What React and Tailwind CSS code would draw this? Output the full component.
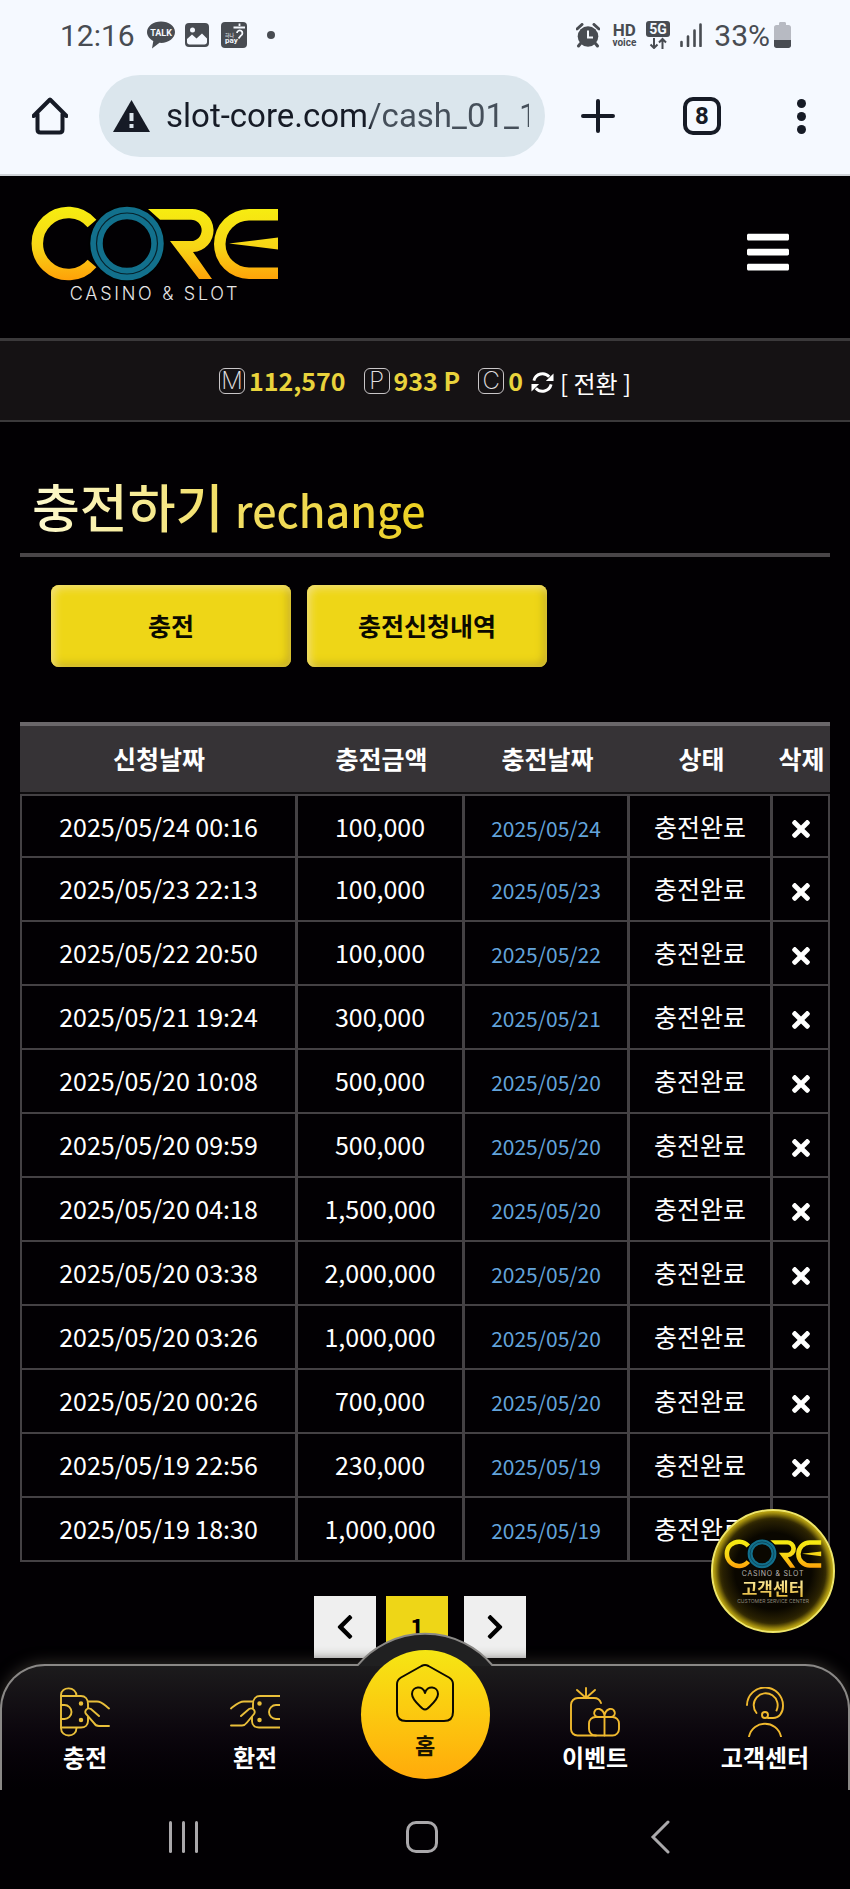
import { FaBars, FaChevronLeft, FaChevronRight, FaTimes } from "react-icons/fa";

const rows = [
  { requested: "2025/05/24 00:16", amount: "100,000", date: "2025/05/24" },
  { requested: "2025/05/23 22:13", amount: "100,000", date: "2025/05/23" },
  { requested: "2025/05/22 20:50", amount: "100,000", date: "2025/05/22" },
  { requested: "2025/05/21 19:24", amount: "300,000", date: "2025/05/21" },
  { requested: "2025/05/20 10:08", amount: "500,000", date: "2025/05/20" },
  { requested: "2025/05/20 09:59", amount: "500,000", date: "2025/05/20" },
  { requested: "2025/05/20 04:18", amount: "1,500,000", date: "2025/05/20" },
  { requested: "2025/05/20 03:38", amount: "2,000,000", date: "2025/05/20" },
  { requested: "2025/05/20 03:26", amount: "1,000,000", date: "2025/05/20" },
  { requested: "2025/05/20 00:26", amount: "700,000", date: "2025/05/20" },
  { requested: "2025/05/19 22:56", amount: "230,000", date: "2025/05/19" },
  { requested: "2025/05/19 18:30", amount: "1,000,000", date: "2025/05/19" },
];

const StatusBar = () => {
  return (
    <div className="flex h-[70px] items-center justify-between pl-[60px] pr-[59px] font-['Roboto',sans-serif] text-[30px] text-[#484c52]">
      <div className="flex items-center">
        <span>12:16</span>
        <svg className="ml-3 h-7 w-7" viewBox="0 0 28 28">
          <path
            d="M14 0.5C6.300.5 0 5.200 0 11c0 3.800 2.600 7 6.300 8.900L5 27.500l7.500-5.700c.5 0 1 .1 1.500.1 7.700 0 14-4.900 14-10.900S21.700.5 14 .5z"
            fill="#484c52"
          />
          <text x="14" y="15" textAnchor="middle" fontSize="9" fontWeight="700" fill="#f5f9ff">
            TALK
          </text>
        </svg>
        <svg className="ml-2.5 h-6 w-6" viewBox="0 0 24 24">
          <rect width="24" height="24" rx="4" fill="#484c52" />
          <path d="M2 19v-3l5-4.500 4.500 4L17 10.500l5 5V19c0 1.500-1 2.500-2.500 2.500h-15C3 21.500 2 20.500 2 19z" fill="#f5f9ff" />
          <circle cx="7.500" cy="7" r="2.500" fill="#f5f9ff" />
        </svg>
        <svg className="ml-3 h-[26px] w-[26px]" viewBox="0 0 26 26">
          <rect width="26" height="26" rx="4" fill="#484c52" />
          <path d="M18.500 1.500v2.500M12.500 5.500h11.500M16 11a2.700 2.700 0 1 1 4 2.500l-2.500 3" fill="none" stroke="#f5f9ff" strokeWidth="1.800" />
          <text x="4" y="15" fontSize="5" fill="#f5f9ff" fontFamily="Noto Sans CJK KR">
            하나
          </text>
          <text x="4" y="21" fontSize="8" fontWeight="700" fill="#f5f9ff">
            pay
          </text>
        </svg>
        <span className="ml-5 h-2 w-2 rounded-full bg-[#484c52]" />
      </div>

      <div className="flex items-center">
        <svg className="h-[25px] w-6" viewBox="0 0 24 25">
          <path d="M1 6l5-4.500M23 6l-5-4.500M4.500 20.500L2.500 23M19.500 20.500l2 2.500" stroke="#484c52" strokeWidth="3" strokeLinecap="round" />
          <circle cx="12" cy="13.500" r="10.300" fill="#484c52" />
          <path d="M12 7.500v7h5" fill="none" stroke="#f5f9ff" strokeWidth="2" />
        </svg>
        <div className="ml-3 flex flex-col items-center font-bold">
          <span className="text-[17px] leading-4">HD</span>
          <span className="text-[10px] leading-[10px]">voice</span>
        </div>
        <svg className="ml-2.5 h-7 w-6" viewBox="0 0 24 28">
          <rect width="24" height="16" rx="3" fill="#484c52" />
          <text x="12" y="13" textAnchor="middle" fontSize="14" fontWeight="700" fill="#f5f9ff">
            5G
          </text>
          <path d="M8 17v10M4.500 23.500L8 27l3.500-3.500M16.500 28V18M13 21.500l3.500-3.500 3.500 3.500" fill="none" stroke="#484c52" strokeWidth="2" />
        </svg>
        <svg className="ml-2.5 h-6 w-[22px]" viewBox="0 0 22 24">
          <path d="M1.500 19v4M8 13.500V23M14.500 7.500V23M20.500 1.500V23" stroke="#484c52" strokeWidth="2.600" strokeLinecap="round" />
        </svg>
        <span className="ml-3">33%</span>
        <svg className="ml-1 h-[26px] w-[17px]" viewBox="0 0 17 26">
          <path d="M5 3V1.500C5 .7 5.500 0 6.500 0h4C11.500 0 12 .7 12 1.500V3h2.500C16 3 17 4 17 5.500V18H0V5.500C0 4 1 3 2.500 3z" fill="#b7bac2" />
          <path d="M0 18h17v5.500c0 1.500-1 2.500-2.500 2.500h-12C1 26 0 25 0 23.500z" fill="#484c52" />
        </svg>
      </div>
    </div>
  );
};

const BrowserBar = () => {
  return (
    <div className="flex h-[104px] items-center pb-3 pl-8 pr-11 text-[#161b26]">
      <button type="button" aria-label="Home">
        <svg className="h-[38px] w-9" viewBox="0 0 36 38">
          <path
            d="M1.500 19L18 2.500 34.500 19M5.500 17v15.500c0 2 1 3 3 3h19c2 0 3-1 3-3V17"
            fill="none"
            stroke="currentColor"
            strokeWidth="4"
            strokeLinecap="round"
            strokeLinejoin="round"
          />
        </svg>
      </button>
      <div className="ml-[31px] flex h-[82px] flex-1 items-center rounded-full bg-[#dbe6ed] pl-3.5 pr-4">
        <svg className="h-8 w-[37px] shrink-0" viewBox="0 0 37 32">
          <path d="M18.500 0L37 32H0z" fill="currentColor" />
          <path d="M18.500 13v8M18.500 24v4" stroke="#dbe6ed" strokeWidth="4" />
        </svg>
        <input
          type="text"
          aria-label="Address"
          defaultValue="slot-core.com/cash_01_1.php"
          className="ml-4 w-full min-w-0 bg-linear-to-r from-[#161b26] from-56% to-[#454f5a] to-57% bg-clip-text font-['Roboto',sans-serif] text-[33px] leading-[44px] text-transparent outline-none"
        />
      </div>
      <button type="button" aria-label="New tab" className="ml-9">
        <svg className="h-[34px] w-[34px]" viewBox="0 0 34 34">
          <path d="M17 2v30M2 17h30" stroke="currentColor" strokeWidth="4" strokeLinecap="round" />
        </svg>
      </button>
      <button
        type="button"
        className="ml-[68px] flex h-[38px] w-[38px] items-center justify-center rounded-[10px] border-4 border-[#161b26] font-['Roboto',sans-serif] text-2xl font-bold"
      >
        8
      </button>
      <button type="button" aria-label="Menu" className="ml-[76px] flex flex-col gap-1">
        <span className="h-[9px] w-[9px] rounded-full bg-[#161b26]" />
        <span className="h-[9px] w-[9px] rounded-full bg-[#161b26]" />
        <span className="h-[9px] w-[9px] rounded-full bg-[#161b26]" />
      </button>
    </div>
  );
};

const CoreLogo = ({ id, className }) => {
  return (
    <svg className={className} viewBox="0 0 250 76">
      <defs>
        <linearGradient id={id} gradientUnits="userSpaceOnUse" x1="0" y1="0" x2="0" y2="75">
          <stop offset="0" stopColor="#f6ee10" />
          <stop offset="0.55" stopColor="#f7d516" />
          <stop offset="1" stopColor="#ff9f08" />
        </linearGradient>
      </defs>
      <path d="M62 17.500A31 31 0 1 0 62 57.500" fill="none" stroke={`url(#${id})`} strokeWidth="11.500" />
      <path
        d="M118 3H161a21.500 21.500 0 0 1 2 43L182 73H169L140 35H161a10.600 10.600 0 0 0 0-21.300H130Z"
        fill={`url(#${id})`}
      />
      <path
        d="M248 3H219a35 35 0 0 0 0 70H248V61.500H219a23.500 23.500 0 0 1 0-47H248Z"
        fill={`url(#${id})`}
      />
      <path d="M199 37.500L248 31.500V43.500Z" fill={`url(#${id})`} />
      <circle cx="97" cy="37.500" r="37.500" fill="none" stroke="#000" strokeWidth="2" />
      <circle cx="97" cy="37.500" r="30.500" fill="none" stroke="#12708c" strokeWidth="12.500" />
      <circle cx="97" cy="37.500" r="30.500" fill="none" stroke="#06222c" strokeWidth="1.200" />
    </svg>
  );
};

const Point = ({ letter, value }) => {
  return (
    <div className="flex items-center gap-1">
      <span className="flex h-[26px] w-[26px] items-center justify-center rounded-md border border-[#c9c6c8] font-['Inter',sans-serif] text-2xl font-extralight leading-none text-[#e4e1e3]">
        {letter}
      </span>
      <span className="font-bold text-[#e9d33c]">{value}</span>
    </div>
  );
};

const ChargeIcon = () => (
  <svg className="h-[50px] w-[50px]" viewBox="0 0 50 50" fill="none" stroke="#e9bf3a" strokeWidth="1.900" strokeLinecap="round">
    <path d="M1 41V8c0-9 15.500-9 15.500 1M1 41c0 10 15.500 10 15.500 0" />
    <path d="M1 9h20c4 0 7 3 7 8v4M28 30v4c0 4-3 6.500-7 6.500H1" />
    <path d="M1 18h3.500a7 7 0 0 1 0 14H1" />
    <path d="M28 14.500h9c5 0 7 3 12 7M39 29l-8-7c-4-2-7 2-5 5l8 9c1 2 3 3 5 3h10" />
    <circle cx="21" cy="16.500" r="1.300" fill="#e9bf3a" />
    <circle cx="21" cy="33" r="1.300" fill="#e9bf3a" />
  </svg>
);

const ExchangeIcon = () => (
  <svg className="h-[50px] w-[50px]" viewBox="0 0 50 50" fill="none" stroke="#e9bf3a" strokeWidth="1.900" strokeLinecap="round">
    <path d="M50 9H30c-4 0-7 3-7 8v4M22 30v4c0 4 3 6.500 7 6.500h21" />
    <path d="M50 18h-4a7 7 0 0 0 0 14h4" />
    <path d="M23 14.500h-9c-5 0-8 3-13 7M11 29l8-7c4-2 7 2 5 5l-7 8.500c-1.500 2-3 3-5 3H1" />
    <circle cx="29.500" cy="16.500" r="1.300" fill="#e9bf3a" />
    <circle cx="29.500" cy="33" r="1.300" fill="#e9bf3a" />
  </svg>
);

const EventIcon = () => (
  <svg className="h-[50px] w-[50px]" viewBox="0 0 50 50" fill="none" stroke="#f0b92e" strokeWidth="1.900" strokeLinecap="round">
    <path d="M16 1v10M7 3l9 8 9-8" />
    <path d="M31 16c-1-3-3-5-7-5H8c-4 0-7 3-7 7v24c0 4 3 6.500 6.500 6.500H26" />
    <rect x="19" y="30" width="30" height="18.500" rx="6.500" />
    <path d="M34.500 30v18.500M34.500 30h-7c-6-2-3-9 2-8 3 1 5 4 5 8zM34.500 30h7c6-2 3-9-2-8-3 1-5 4-5 8z" />
  </svg>
);

const SupportIcon = () => (
  <svg className="h-[50px] w-[50px]" viewBox="0 0 50 50" fill="none" stroke="#f0b92e" strokeWidth="1.900" strokeLinecap="round">
    <path d="M7 18a18 18 0 0 1 36 1c0 7-4 12-10 12h-5" />
    <path d="M16.500 26a12 12 0 1 1 20-2.500" />
    <circle cx="25" cy="28" r="3" />
    <path d="M9 49.500c4-17 28-17 32 0" />
  </svg>
);

const HomeIcon = () => (
  <svg className="h-[58px] w-[58px]" viewBox="0 0 58 58" fill="none" stroke="#0c0a00" strokeWidth="2" strokeLinejoin="round">
    <path d="M1 20c0-3 1.500-5 4-6.500L25.500 2c2.500-1.300 4.500-1.300 7 0L53 13.500c2.500 1.500 4 3.500 4 6.500v28c0 6-3 9-9 9H10c-6 0-9-3-9-9z" />
    <path d="M29 29c2-8 13-7 13 1 0 6-7 11-10.500 14.500-1.500 1.300-3.500 1.300-5 0C23 41 16 36 16 30c0-8 11-9 13-1z" />
  </svg>
);

const NavItem = ({ icon, label }) => {
  return (
    <a href="#" className="flex flex-col items-center gap-0.5 pt-[23px]">
      {icon}
      <span className="whitespace-nowrap text-2xl font-bold leading-9 text-white">{label}</span>
    </a>
  );
};

const BottomNav = () => {
  return (
    <nav className="relative z-10">
      {/* Support badge */}
      <a
        href="#"
        className="absolute bottom-full right-[15px] z-20 mb-[31px] flex h-[124px] w-[124px] flex-col items-center rounded-full border-2 border-[#efe66a] bg-[radial-gradient(circle,#0a0700_45%,#2e2503_62%,#a89008_72%)] pt-7 shadow-[inset_0_0_8px_#e8d020]"
      >
        <CoreLogo id="badgeGold" className="h-[30px] w-[98px]" />
        <span className="font-['Inter',sans-serif] text-[7px] leading-[9px] tracking-widest text-[#b8b4b0]">CASINO &amp; SLOT</span>
        <span className="bg-linear-to-b from-[#fff3a8] to-[#e3b52c] bg-clip-text text-[17px] font-bold leading-5 text-transparent">
          고객센터
        </span>
        <span className="font-['Inter',sans-serif] text-[5px] leading-[6px] text-[#8d887c]">CUSTOMER SERVICE CENTER</span>
      </a>

      <div className="relative grid h-[126px] grid-cols-5 rounded-t-[45px] bg-linear-to-b from-[#1d1c1d] to-[#020003] shadow-[0_-2px_14px_#2b2824]">
        <div className="pointer-events-none absolute inset-0 rounded-t-[45px] border-x-2 border-t-2 border-[#8a8886]" />
        <NavItem icon={<ChargeIcon />} label="충전" />
        <NavItem icon={<ExchangeIcon />} label="환전" />
        <div className="relative flex justify-center">
          {/* Raised arch behind the home button */}
          <svg className="absolute bottom-full -mb-0.5 h-[34px] w-[140px]" viewBox="0 0 140 34">
            <path d="M2 34A88 88 0 0 1 138 34Z" fill="#202021" />
            <path d="M2 34A88 88 0 0 1 138 34" fill="none" stroke="#8a8886" strokeWidth="2" />
          </svg>
          <a
            href="#"
            className="absolute -top-3.5 flex h-[129px] w-[129px] flex-col items-center rounded-full bg-linear-to-b from-[#f5e614] to-[#ffaa0a] pt-[14px]"
          >
            <HomeIcon />
            <span className="pt-1 text-[22px] font-bold leading-9 text-[#1a1400]">홈</span>
          </a>
        </div>
        <NavItem icon={<EventIcon />} label="이벤트" />
        <NavItem icon={<SupportIcon />} label="고객센터" />
      </div>
    </nav>
  );
};

const SystemBar = () => {
  return (
    <div className="relative z-20 flex h-[99px] items-center justify-between bg-[#020003] pb-1.5 pl-[169px] pr-[180px]">
      <button type="button" aria-label="Recent apps" className="flex gap-2.5">
        <span className="h-8 w-[3px] rounded-full bg-[#aaa8ab]" />
        <span className="h-8 w-[3px] rounded-full bg-[#aaa8ab]" />
        <span className="h-8 w-[3px] rounded-full bg-[#aaa8ab]" />
      </button>
      <button type="button" aria-label="Home" className="mr-1 h-8 w-8 rounded-[10px] border-3 border-[#aaa8ab]" />
      <button type="button" aria-label="Back">
        <svg className="h-[34px] w-5" viewBox="0 0 20 34">
          <path d="M18 2L3 17l15 15" fill="none" stroke="#aaa8ab" strokeWidth="3" strokeLinecap="round" />
        </svg>
      </button>
    </div>
  );
};

const App = () => {
  return (
    <div className="overflow-hidden bg-[#020003] font-['Noto_Sans_CJK_KR',sans-serif] text-white">
      {/* Phone and browser bars */}
      <div className="border-b-2 border-[#cfd3d8] bg-[#f5f9ff]">
        <StatusBar />
        <BrowserBar />
      </div>

      {/* Site header */}
      <header className="flex h-[162px] items-start justify-between pl-[30px] pr-[61px] pt-[30px]">
        <a href="#" className="flex flex-col items-center">
          <CoreLogo id="headerGold" className="h-[76px] w-[250px]" />
          <span className="font-['Inter',sans-serif] text-[18px] font-light leading-6 tracking-[0.15em] text-[#e6e6e6]">
            CASINO &amp; SLOT
          </span>
        </a>
        <button type="button" aria-label="메뉴" className="pt-[22px]">
          <FaBars className="h-12 w-[42px]" />
        </button>
      </header>

      {/* Balance */}
      <div className="flex h-[84px] items-center justify-center gap-[18px] border-b-2 border-t-3 border-[#3b393b] bg-[#151214] text-[25px]">
        <Point letter="M" value="112,570" />
        <Point letter="P" value="933 P" />
        <div className="flex items-center gap-2">
          <Point letter="C" value="0" />
          <button type="button" className="flex items-center gap-1.5 pt-1">
            <svg className="h-[23px] w-[23px]" viewBox="0 0 24 24">
              <path d="M3 10a9.300 9.300 0 0 1 16-4M21 14a9.300 9.300 0 0 1-16 4" fill="none" stroke="#fff" strokeWidth="3" />
              <path d="M23.500 2.500v8H15.500zM.5 21.500v-8H8.500z" fill="#fff" />
            </svg>
            <span className="text-2xl">[ 전환 ]</span>
          </button>
        </div>
      </div>

      <main className="px-5">
        {/* Title */}
        <div className="border-b-4 border-[#494548] pb-2 pl-3 pt-12">
          <h1 className="w-fit bg-linear-to-r from-[#fdfad0] via-[#f3e06a] via-45% to-[#ecd01c] bg-clip-text text-[52px] font-medium leading-[72px] text-transparent">
            충전하기 <span className="text-[43px]">rechange</span>
          </h1>
        </div>

        {/* Tabs */}
        <div className="flex gap-4 pl-[31px] pt-7 text-[25px] font-bold text-[#0c0a00]">
          <button
            type="button"
            className="h-[82px] w-60 rounded-lg bg-[#eed617] shadow-[inset_3px_3px_8px_#f4e27a,inset_-3px_-3px_8px_#c2a91c]"
          >
            충전
          </button>
          <button
            type="button"
            className="h-[82px] w-60 rounded-lg bg-[#eed617] shadow-[inset_3px_3px_8px_#f4e27a,inset_-3px_-3px_8px_#c2a91c]"
          >
            충전신청내역
          </button>
        </div>

        {/* History */}
        <table className="mt-[55px] w-full table-fixed border-separate border-spacing-0 text-center text-[25px]">
          <colgroup>
            <col className="w-[278px]" />
            <col className="w-[167px]" />
            <col className="w-[165px]" />
            <col className="w-[143px]" />
            <col className="w-[57px]" />
          </colgroup>
          <thead>
            <tr className="h-[72px] bg-[#363336] [&>th]:whitespace-nowrap [&>th]:border-b-2 [&>th]:border-t-4 [&>th]:border-b-[#0d0b0d] [&>th]:border-t-[#6a676a]">
              <th>신청날짜</th>
              <th>충전금액</th>
              <th>충전날짜</th>
              <th>상태</th>
              <th>삭제</th>
            </tr>
          </thead>
          <tbody>
            {rows.map((row) => (
              <tr
                key={row.requested}
                className="h-16 leading-9 [&>td]:border-b-2 [&>td]:border-r-3 [&>td]:border-[#444144] first:[&>td]:border-t-2 [&>td:first-child]:border-l-2 [&>td:last-child]:border-r-2"
              >
                <td className="pt-3 align-baseline">{row.requested}</td>
                <td className="pt-3 align-baseline">{row.amount}</td>
                <td className="pt-3 align-baseline text-[21px] text-[#63a4dc]">{row.date}</td>
                <td className="pt-3 align-baseline">충전완료</td>
                <td className="pt-1.5 align-middle">
                  <button type="button" aria-label="삭제" className="block w-full">
                    <FaTimes className="mx-auto h-[26px] w-[18px]" />
                  </button>
                </td>
              </tr>
            ))}
          </tbody>
        </table>

        {/* Pagination */}
        <div className="flex justify-center pb-1.5 pr-2.5 pt-[34px] text-black">
          <button type="button" aria-label="이전" className="flex h-[62px] w-[62px] items-center justify-center bg-[#efefef]">
            <FaChevronLeft className="h-7 w-[18px]" />
          </button>
          <button type="button" className="ml-2.5 h-[62px] w-[62px] bg-[#eed617] text-2xl font-bold">
            1
          </button>
          <button type="button" aria-label="다음" className="ml-4 flex h-[62px] w-[62px] items-center justify-center bg-[#efefef]">
            <FaChevronRight className="h-7 w-[18px]" />
          </button>
        </div>
      </main>

      <BottomNav />
      <SystemBar />
    </div>
  );
};

export default App;
